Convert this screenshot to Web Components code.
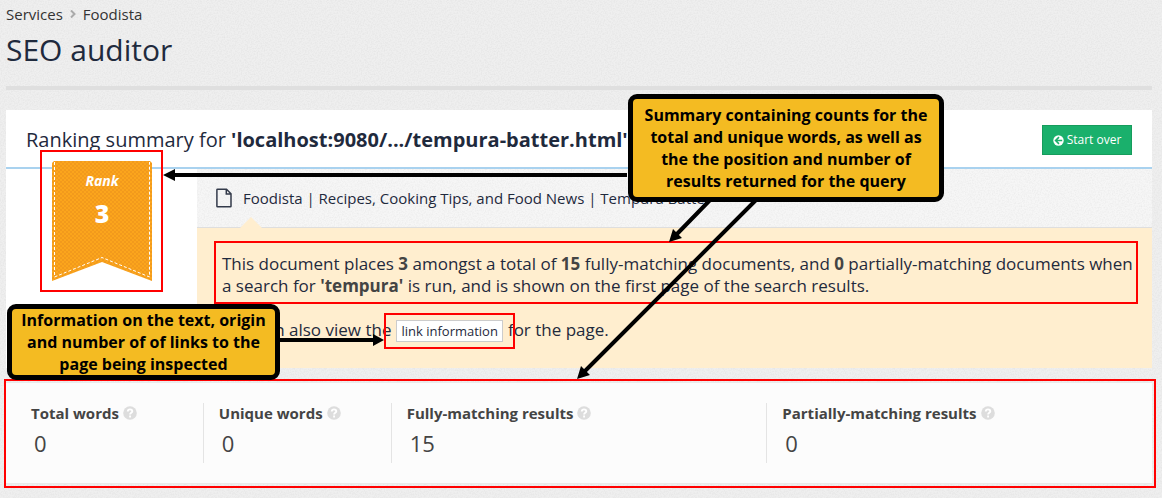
<!DOCTYPE html>
<html lang="en">
<head>
<meta charset="utf-8">
<meta name="viewport" content="width=device-width, initial-scale=1">
<title>SEO auditor</title>
<style>
  :root {
    --ink: #1f2a3d;
    --grain: url("data:image/svg+xml,%3Csvg xmlns='http://www.w3.org/2000/svg' width='120' height='120'%3E%3Cfilter id='n'%3E%3CfeTurbulence type='fractalNoise' baseFrequency='.7' numOctaves='2' stitchTiles='stitch'/%3E%3CfeColorMatrix values='0 0 0 0 0 0 0 0 0 0 0 0 0 0 0 .08 0 0 0 -.03'/%3E%3C/filter%3E%3Crect width='120' height='120' filter='url(%23n)'/%3E%3C/svg%3E");
  }
  body {
    margin: 0;
    position: relative;
    background: #efefef var(--grain);
    color: var(--ink);
    font: 15px/22px "Open Sans", "Noto Sans", sans-serif;
  }
  strong { color: #444; }
</style>
</head>
<body>
  <auditor-page>
    <page-header slot="header" heading="SEO auditor">
      <a href="#services">Services</a>
      <a href="#foodista">Foodista</a>
    </page-header>
    <summary-panel>
      <span slot="heading">Ranking summary for <b>'localhost:9080/.../tempura-batter.html'</b></span>
      <marked-area slot="rank" class="rank"><rank-ribbon rank="3"></rank-ribbon></marked-area>
      <span slot="title">Foodista | Recipes, Cooking Tips, and Food News | Tempura Batter</span>
      <marked-area>This document places <strong>3</strong> amongst a total of <strong>15</strong> fully-matching documents, and <strong>0</strong> partially-matching documents when a search for <strong>'tempura'</strong> is run, and is shown on the first page of the search results.</marked-area>
      <link-note></link-note>
    </summary-panel>
    <marked-area class="stats">
      <stat-row>
        <stat-item label="Total words" value="0"></stat-item>
        <stat-item label="Unique words" value="0"></stat-item>
        <stat-item label="Fully-matching results" value="15"></stat-item>
        <stat-item label="Partially-matching results" value="0"></stat-item>
      </stat-row>
    </marked-area>
  </auditor-page>
  <callout-layer></callout-layer>

<script>
class AuditorPage extends HTMLElement {
  constructor() {
    super();
    this.attachShadow({ mode: 'open' }).innerHTML = `
      <style>
        :host { display: block; padding: 3px 10px 14px 6px; }
        main { display: flex; flex-direction: column; gap: 14px; margin-top: 20px; }
        ::slotted(.stats) { --frame: -3px -4px -4px -2px; }
      </style>
      <slot name="header"></slot>
      <main><slot></slot></main>
    `;
  }
}

class PageHeader extends HTMLElement {
  connectedCallback() {
    this.attachShadow({ mode: 'open' }).innerHTML = `
      <style>
        :host { display: block; border-bottom: 4px solid #dfdfdf; padding-bottom: 16px; }
        nav { display: flex; align-items: center; gap: 7px; }
        ::slotted(a) { color: #333; text-decoration: none; }
        svg { fill: none; stroke: #aaa; stroke-width: 2; }
        h1 { margin: 5px 0 0; font-size: 30px; font-weight: 400; line-height: 40px; }
      </style>
      <nav aria-label="Breadcrumb"></nav>
      <h1>${this.getAttribute('heading')}</h1>
    `;
    // one slot per crumb, with a chevron between them
    const links = [...this.querySelectorAll('a')];
    links.forEach((link, i) => link.slot = 'crumb' + i);
    this.shadowRoot.querySelector('nav').innerHTML = links
      .map((link, i) => `<slot name="crumb${i}"></slot>`)
      .join('<svg width="6" height="8" viewBox="0 0 6 8"><path d="M1 .5 4.500 4 1 7.500"/></svg>');
  }
}

class SummaryPanel extends HTMLElement {
  constructor() {
    super();
    this.attachShadow({ mode: 'open' }).innerHTML = `
      <style>
        :host { display: block; background: #fff; }
        header {
          display: flex;
          justify-content: space-between;
          align-items: center;
          padding: 15px 20px 12px;
          border-bottom: 2px solid #a9d2ef;
        }
        h2 { margin: 0; font-size: 20px; font-weight: 400; line-height: 30px; }
        button {
          display: flex;
          align-items: center;
          justify-content: center;
          gap: 3px;
          width: 90px;
          height: 30px;
          padding: 0;
          border: 1px solid #169c5c;
          background: #1ab06c;
          color: #fff;
          font: 12px/20px "Open Sans", sans-serif;
        }
        .body { display: grid; grid-template-columns: 191px minmax(0, 1fr); }
        .rank { padding-left: 46px; margin-top: -8px; }
        .title {
          display: flex;
          align-items: center;
          gap: 11px;
          height: 58px;
          padding-left: 19px;
          border-bottom: 1px solid #dedede;
          background: #f6f6f6 var(--grain);
        }
        .title svg { fill: none; stroke: #333a4a; stroke-width: 1.500; }
        .note {
          position: relative;
          display: flex;
          flex-direction: column;
          gap: 22px;
          padding: 25px 14px 27px 25px;
          background: #ffeecf;
          font-size: 17px;
          line-height: 22px;
        }
        .note::before {
          content: "";
          position: absolute;
          left: 43px;
          top: -11px;
          border: solid transparent;
          border-width: 0 11px 11px;
          border-bottom-color: #ffeecf;
        }
        ::slotted(marked-area) { --frame: -12px 0 -7px -8px; }
        ::slotted(.rank) { --frame: -11px -11px -11px -12px; width: 100px; }
      </style>
      <header>
        <h2><slot name="heading"></slot></h2>
        <button type="button">
          <svg width="11" height="11" viewBox="0 0 11 11"><circle cx="5.500" cy="5.500" r="5.200" fill="#fff"/><path d="M6 2.100 2.600 5.500 6 8.900M3 5.500h6.200" fill="none" stroke="#1ab06c" stroke-width="1.600"/></svg>
          Start over
        </button>
      </header>
      <div class="body">
        <div class="rank"><slot name="rank"></slot></div>
        <div>
          <div class="title">
            <svg width="16" height="20" viewBox="0 0 16 20"><path d="M1.500 1.200h9l4.500 4.500v12.500q0 .6-.6.6H1.500q-.6 0-.6-.6V1.800q0-.6.6-.6ZM10.300 1.500v4.600h4.500"/></svg>
            <slot name="title"></slot>
          </div>
          <div class="note"><slot></slot></div>
        </div>
      </div>
    `;
  }
}

class RankRibbon extends HTMLElement {
  connectedCallback() {
    this.attachShadow({ mode: 'open' }).innerHTML = `
      <style>
        :host { display: grid; width: 100px; height: 120px; color: #fff; text-align: center; }
        svg, div { grid-area: 1 / 1; }
        div { padding-top: 9px; font-size: 14px; font-weight: 700; }
        em { display: block; }
        b { display: block; margin-top: 6px; font-size: 25px; line-height: 30px; font-weight: 800; }
      </style>
      <svg width="100" height="120" viewBox="0 0 100 120">
        <pattern id="weave" width="4" height="4" patternUnits="userSpaceOnUse">
          <rect width="4" height="4" fill="#fba51c"/>
          <path d="M0 0h2v2H0zM2 2h2v2H2z" fill="#f29a1c"/>
        </pattern>
        <path d="M2 0h96l2 2v118l-50-19L0 120V2z" fill="url(#weave)"/>
        <path d="M2.500 1v115L50 96.500 97.500 116V1" fill="none" stroke="#fff" stroke-dasharray="3 2"/>
      </svg>
      <div><em>Rank</em><b>${this.getAttribute('rank')}</b></div>
    `;
  }
}

// Red frame round whatever is slotted in, sized by --frame
class MarkedArea extends HTMLElement {
  constructor() {
    super();
    this.attachShadow({ mode: 'open' }).innerHTML = `
      <style>
        :host { display: block; position: relative; }
        :host::after {
          content: "";
          position: absolute;
          inset: var(--frame);
          border: 2px solid #f00;
          pointer-events: none;
        }
      </style>
      <slot></slot>
    `;
  }
}

class LinkNote extends HTMLElement {
  constructor() {
    super();
    this.attachShadow({ mode: 'open' }).innerHTML = `
      <style>
        :host { display: block; }
        div { display: flex; align-items: baseline; gap: 5px; height: 22px; }
        marked-area { --frame: -7px -12px; }
        button {
          display: block;
          height: 22px;
          padding: 0 4px;
          border: 1px solid #ccc;
          background: #fff;
          color: var(--ink);
          font: 13px/20px "Open Sans", sans-serif;
        }
      </style>
      <div>
        <span>You can also view the</span>
        <marked-area><button type="button">link information</button></marked-area>
        <span>for the page.</span>
      </div>
    `;
  }
}

class StatRow extends HTMLElement {
  constructor() {
    super();
    this.attachShadow({ mode: 'open' }).innerHTML = `
      <style>
        :host {
          display: grid;
          grid-template-columns: 2fr 2fr 4fr 4fr;
          padding: 20px 10px 20px 9px;
          border: solid #eaeaea;
          border-width: 1px 0;
          background: #fcfcfc;
        }
        ::slotted(*) { border-left: 1px solid #e4e4e4; }
        ::slotted(:first-child) { border-color: transparent; }
      </style>
      <slot></slot>
    `;
  }
}

class StatItem extends HTMLElement {
  connectedCallback() {
    this.attachShadow({ mode: 'open' }).innerHTML = `
      <style>
        :host { display: block; padding-left: 15px; color: #444; }
        .label { display: flex; align-items: center; gap: 4px; font-weight: 700; line-height: 20px; white-space: nowrap; }
        .value { padding-left: 3px; font-size: 22px; line-height: 40px; }
      </style>
      <div class="label">
        ${this.getAttribute('label')}
        <svg width="14" height="14" viewBox="0 0 14 14"><circle cx="7" cy="7" r="6.800" fill="#ddd"/><path d="M4.800 5.500C4.800 2.700 9.300 2.800 9.300 5.300 9.300 6.900 7.100 6.800 7.100 8.500M7.100 9.600v1.900" fill="none" stroke="#fff" stroke-width="1.900"/></svg>
      </div>
      <div class="value">${this.getAttribute('value')}</div>
    `;
  }
}

// Notes and arrows that lie over the page
class CalloutLayer extends HTMLElement {
  constructor() {
    super();
    this.attachShadow({ mode: 'open' }).innerHTML = `
      <style>
        :host { position: absolute; inset: 0; pointer-events: none; }
        svg { position: absolute; inset: 0; width: 100%; height: 100%; }
        p {
          position: absolute;
          box-sizing: border-box;
          margin: 0;
          padding: 5px 0;
          border: 5px solid #000;
          border-radius: 9px;
          background: #f4bb22;
          color: #000;
          font-size: 16px;
          font-weight: 700;
          line-height: 22px;
          text-align: center;
        }
        .summary { left: 628px; top: 94px; width: 316px; }
        .links { left: 7px; top: 304px; width: 273px; padding: 0; }
      </style>
      <svg>
        <g stroke="#000" stroke-width="4">
          <path d="M627 175H172M280 340h94M712 198l-36 37M758 198 584 372"/>
        </g>
        <path d="M163 175l12-6v12zM384 340l-11-6v12zM669 242l4-13 9 9zM577 379l4-13 9 9z"/>
      </svg>
      <p class="summary">Summary containing counts for the<br>total and unique words, as well as<br>the the position and number of<br>results returned for the query</p>
      <p class="links">Information on the text, origin<br>and number of of links to the<br>page being inspected</p>
    `;
  }
}

customElements.define('auditor-page', AuditorPage);
customElements.define('page-header', PageHeader);
customElements.define('summary-panel', SummaryPanel);
customElements.define('rank-ribbon', RankRibbon);
customElements.define('marked-area', MarkedArea);
customElements.define('link-note', LinkNote);
customElements.define('stat-row', StatRow);
customElements.define('stat-item', StatItem);
customElements.define('callout-layer', CalloutLayer);
</script>
</body>
</html>
